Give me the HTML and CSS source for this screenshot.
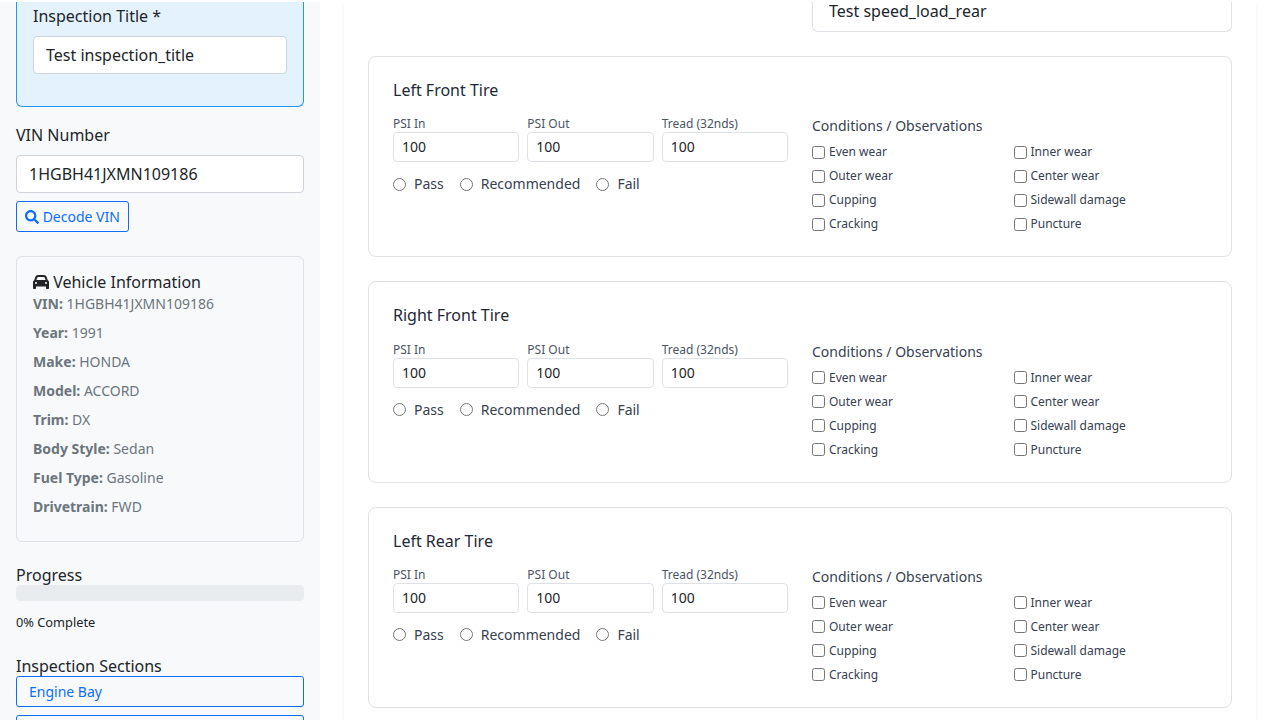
FILE: index.html
```
<!DOCTYPE html>
<html lang="en">
<head>
<meta charset="utf-8">
<title>Vehicle Inspection</title>
<link rel="stylesheet" href="styles.css">
</head>
<body>
<div class="app">
  <aside class="sidebar">
    <div class="title-card">
      <label class="label" for="title">Inspection Title *</label>
      <input class="control" id="title" type="text" value="Test inspection_title">
    </div>
    <label class="label" for="vin">VIN Number</label>
    <input class="control" id="vin" type="text" value="1HGBH41JXMN109186">
    <button class="btn btn-decode" type="button"><svg class="icon" viewBox="0 0 512 512"><path fill="currentColor" d="M505 442.700L405.300 343c-4.500-4.500-10.600-7-17-7H372c27.600-35.300 44-79.700 44-128C416 93.100 322.900 0 208 0S0 93.100 0 208s93.100 208 208 208c48.300 0 92.700-16.400 128-44v16.300c0 6.400 2.500 12.500 7 17l99.700 99.700c9.400 9.400 24.600 9.400 33.900 0l28.300-28.300c9.400-9.400 9.400-24.600.1-34zM208 336c-70.700 0-128-57.200-128-128 0-70.700 57.200-128 128-128 70.700 0 128 57.200 128 128 0 70.700-57.200 128-128 128z"/></svg> Decode VIN</button>
    <section class="vehicle">
      <h6 class="heading"><svg class="icon" viewBox="0 0 512 512"><path fill="currentColor" d="M135.200 117.400L109.100 192H402.900l-26.100-74.600C372.300 104.600 360.200 96 346.600 96H165.400c-13.600 0-25.700 8.600-30.200 21.400zM39.600 196.800L74.800 96.300C88.300 57.800 124.600 32 165.400 32H346.600c40.800 0 77.100 25.800 90.600 64.300l35.200 100.500c23.200 9.600 39.600 32.500 39.600 59.200V448c0 17.700-14.300 32-32 32H448c-17.700 0-32-14.300-32-32V400H96v48c0 17.700-14.300 32-32 32H32c-17.700 0-32-14.300-32-32V256c0-26.700 16.400-49.600 39.600-59.200zM128 288a32 32 0 1 0-64 0 32 32 0 1 0 64 0zm288 32a32 32 0 1 0 0-64 32 32 0 1 0 0 64z"/></svg> Vehicle Information</h6>
      <p><b>VIN:</b> 1HGBH41JXMN109186</p>
      <p><b>Year:</b> 1991</p>
      <p><b>Make:</b> HONDA</p>
      <p><b>Model:</b> ACCORD</p>
      <p><b>Trim:</b> DX</p>
      <p><b>Body Style:</b> Sedan</p>
      <p><b>Fuel Type:</b> Gasoline</p>
      <p><b>Drivetrain:</b> FWD</p>
    </section>
    <h6 class="heading">Progress</h6>
    <div class="progress"></div>
    <div class="complete">0% Complete</div>
    <h6 class="heading">Inspection Sections</h6>
    <nav class="sections">
      <button class="btn" type="button">Engine Bay</button>
      <button class="btn" type="button"></button>
    </nav>
  </aside>
  <main class="main">
    <div class="panel">
      <div class="specs"><input class="spec" type="text" value="Test speed_load_rear"></div>
      <div class="tires" id="tires"></div>
    </div>
  </main>
</div>
<script src="script.js"></script>
</body>
</html>
```
FILE: styles.css
```
* { box-sizing: border-box; }
body {
  margin: 0;
  padding-top: 2px;
  height: 720px;
  overflow: hidden;
  background: #fff;
  color: #212529;
  font: 16px/1.5 "Noto Sans", "Liberation Sans", sans-serif;
}
input, button { font: inherit; color: inherit; margin: 0; }
.app { display: flex; height: 718px; overflow: hidden; }
.sidebar { flex: 0 0 320px; padding: 0 16px; background: #f8f9fb; overflow: hidden; }
.title-card {
  padding: 2px 16px 32px;
  margin-bottom: 16px;
  background: #e3f2fd;
  border: 1px solid #2196f3;
  border-top: 0;
  border-radius: 0 0 6px 6px;
}
.title-card .control { margin-bottom: 0; }
.label { display: block; margin-bottom: 8px; }
.control {
  display: block;
  width: 100%;
  height: 38px;
  padding: 6px 12px;
  margin-bottom: 8px;
  background: #fff;
  border: 1px solid #ced4da;
  border-radius: 4px;
}
.btn {
  height: 31px;
  padding: 4px 12px;
  font-size: 14px;
  line-height: 21px;
  color: #0d6efd;
  text-align: left;
  background: transparent;
  border: 1px solid #0d6efd;
  border-radius: 3px;
}
.btn-decode { display: block; padding: 4px 8px; }
.icon { width: 1em; height: 1em; vertical-align: -0.125em; }
.heading { margin: 0; font-size: 16px; font-weight: 400; line-height: 19.2px; }
.vehicle {
  margin: 24px 0;
  padding: 16px;
  border: 1px solid #dee2e6;
  border-radius: 6px;
}
.vehicle .heading { margin-bottom: 0.5px; }
.vehicle p { margin: 0 0 8px; font-size: 14px; line-height: 21px; color: #6c757d; }
.progress { height: 16px; background: #e9ecef; border-radius: 4px; }
.complete { margin: 12px 0 24.5px; font-size: 12.8px; line-height: 19.5px; }
.sections { display: flex; flex-direction: column; gap: 8px; }

.main { flex: 1; padding: 0 24px; overflow: hidden; }
.panel { height: 718px; padding: 0 24px; background: #fff; box-shadow: 0 2px 4px rgba(0, 0, 0, .075); }
.specs { display: grid; grid-template-columns: 1fr 420px; margin-bottom: 24px; }
.spec {
  grid-column: 2;
  height: 30px;
  padding: 0 16px 11px;
  background: #fff;
  border: 1px solid #dee2e6;
  border-top: 0;
  border-radius: 0 0 6px 6px;
}
.tires { display: flex; flex-direction: column; gap: 24px; }
.tire { padding: 24px; border: 1px solid #dee2e6; border-radius: 8px; color: #374151; }
.tire .heading { margin-bottom: 16px; color: #1f2937; }
.tire-body { display: grid; grid-template-columns: 1fr 1fr; gap: 24px; }
.measures { display: grid; grid-template-columns: repeat(3, 1fr); gap: 8px; margin-bottom: 11.9px; }
.measure { font-size: 12px; line-height: 16px; color: #4b5563; }
.measure input {
  display: block;
  width: 100%;
  height: 30px;
  padding: 3.4px 8px 4.6px;
  font-size: 14px;
  line-height: 20px;
  color: #212529;
  background: #fff;
  border: 1px solid #dee2e6;
  border-radius: 4px;
}
.ratings { display: flex; gap: 16px; font-size: 14px; line-height: 20px; }
.ratings label { display: flex; align-items: center; gap: 8px; }
.cond-title { margin-bottom: 8px; font-size: 14px; line-height: 20.2px; }
.checks { display: grid; grid-template-columns: 1fr 1fr; gap: 8px; font-size: 12px; line-height: 16px; }
.checks label { display: flex; align-items: center; gap: 4px; }
.checks input { position: relative; top: -0.3px; }
```
FILE: script.js
```
const conditions = ["Even wear", "Inner wear", "Outer wear", "Center wear", "Cupping", "Sidewall damage", "Cracking", "Puncture"];
const measures = ["PSI In", "PSI Out", "Tread (32nds)"];
const ratings = ["Pass", "Recommended", "Fail"];
document.getElementById("tires").innerHTML = ["Left Front Tire", "Right Front Tire", "Left Rear Tire"].map((name, i) => `
  <section class="tire">
    <h6 class="heading">${name}</h6>
    <div class="tire-body">
      <div>
        <div class="measures">${measures.map(m => `<label class="measure">${m}<input type="text" value="100"></label>`).join("")}</div>
        <div class="ratings">${ratings.map(r => `<label><input type="radio" name="rating${i}">${r}</label>`).join("")}</div>
      </div>
      <div>
        <div class="cond-title">Conditions / Observations</div>
        <div class="checks">${conditions.map(c => `<label><input type="checkbox">${c}</label>`).join("")}</div>
      </div>
    </div>
  </section>`).join("");
```
